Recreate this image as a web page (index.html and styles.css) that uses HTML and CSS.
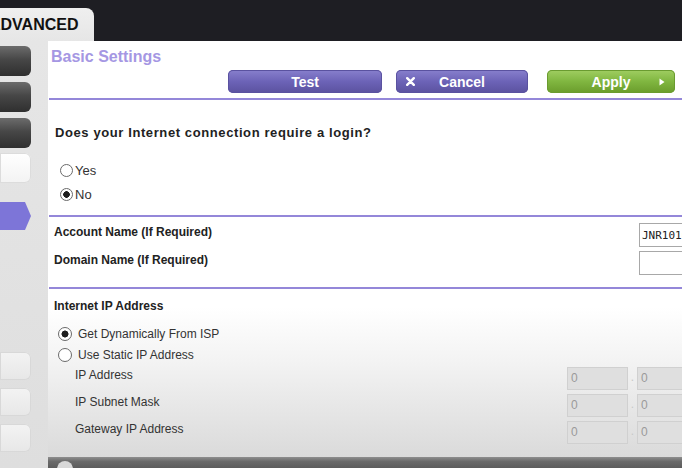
FILE: index.html
```html
<!DOCTYPE html>
<html>
<head>
<meta charset="utf-8">
<link rel="stylesheet" href="styles.css">
</head>
<body>
<header class="topbar">
  <div class="tab"><span class="tab-label">ADVANCED</span></div>
</header>
<div class="page">
  <nav class="sidebar">
    <span class="sb-btn dark"></span>
    <span class="sb-btn dark"></span>
    <span class="sb-btn dark"></span>
    <span class="sb-btn white"></span>
    <span class="sb-arrow"></span>
    <span class="sb-btn light first-light"></span>
    <span class="sb-btn light"></span>
    <span class="sb-btn light"></span>
  </nav>
  <main class="main">
    <div class="content">
      <h1 class="title">Basic Settings</h1>
      <div class="actions">
        <button class="btn purple test"><span class="btn-text">Test</span></button>
        <button class="btn purple cancel">
          <svg class="x-icon" width="9" height="9" viewBox="0 0 9 9"><path d="M1.2 1.2 L7.8 7.8 M7.8 1.2 L1.2 7.8" stroke="#fff" stroke-width="2.4" stroke-linecap="round"/></svg>
          <span class="btn-text">Cancel</span>
          <span></span>
        </button>
        <button class="btn green apply">
          <span></span>
          <span class="btn-text">Apply</span>
          <svg class="tri-icon" width="6" height="8" viewBox="0 0 6 8"><path d="M0.5 0.5 L5.5 4 L0.5 7.5 Z" fill="#fff"/></svg>
        </button>
      </div>
      <div class="rule"></div>

      <p class="question">Does your Internet connection require a login?</p>
      <div class="radio-row first-radio"><span class="radio"></span><span>Yes</span></div>
      <div class="radio-row"><span class="radio on"></span><span>No</span></div>
      <div class="rule rule-2"></div>

      <div class="field first-field">
        <label class="field-label">Account Name (If Required)</label>
        <input class="text-input" type="text" value="JNR1010" readonly>
      </div>
      <div class="field second-field">
        <label class="field-label">Domain Name (If Required)</label>
        <input class="text-input" type="text" value="" readonly>
      </div>
      <div class="rule rule-3"></div>

      <p class="section-title">Internet IP Address</p>
      <div class="ip-radio first-ip-radio"><span class="radio big on"></span><span>Get Dynamically From ISP</span></div>
      <div class="ip-radio second-ip-radio"><span class="radio big"></span><span>Use Static IP Address</span></div>

      <div class="ip-row first-ip-row">
        <span class="ip-label">IP Address</span>
        <span class="dis-input">0</span><span class="dot">.</span><span class="dis-input">0</span>
      </div>
      <div class="ip-row">
        <span class="ip-label">IP Subnet Mask</span>
        <span class="dis-input">0</span><span class="dot">.</span><span class="dis-input">0</span>
      </div>
      <div class="ip-row">
        <span class="ip-label">Gateway IP Address</span>
        <span class="dis-input">0</span><span class="dot">.</span><span class="dis-input">0</span>
      </div>
    </div>
    <div class="footer"><span class="footer-dot"></span></div>
  </main>
</div>
</body>
</html>
```

FILE: styles.css
```css
html, body {
  margin: 0;
  padding: 0;
}
body {
  width: 682px;
  height: 468px;
  overflow: hidden;
  font-family: "Liberation Sans", Arial, sans-serif;
  background: #e4e4e4;
}

/* top bar */
.topbar {
  height: 41px;
  background: #1e1e23;
  display: flex;
  align-items: flex-end;
}
.tab {
  width: 94px;
  height: 33px;
  background: linear-gradient(#efefef, #e6e6e6);
  border-top-right-radius: 8px;
  display: flex;
  align-items: center;
  overflow: hidden;
}
.tab-label {
  font-weight: bold;
  font-size: 16px;
  line-height: 20px;
  margin-left: -11px;
  padding-top: 1px;
  color: #111;
  white-space: nowrap;
}

/* page */
.page {
  display: flex;
  height: 427px;
}
.sidebar {
  width: 48px;
  flex: none;
  background: linear-gradient(#e6e6e6, #dedede);
  display: flex;
  flex-direction: column;
  padding-top: 5px;
  box-sizing: border-box;
}
.sb-btn {
  width: 31px;
  height: 30px;
  border-radius: 0 6px 6px 0;
  flex: none;
}
.sb-btn + .sb-btn { margin-top: 6px; }
.dark {
  background: linear-gradient(#6c6c6c, #474747 45%, #2f2f2f);
}
.sb-btn.white {
  margin-top: 5px;
  background: linear-gradient(#ffffff, #f3f3f3);
  box-shadow: inset 0 0 0 1px #dcdcdc;
}
.sb-arrow {
  width: 31px;
  height: 28px;
  margin-top: 19px;
  background: #7d75d8;
  clip-path: polygon(0 0, 25px 0, 31px 50%, 25px 100%, 0 100%);
  flex: none;
}
.sb-btn.light {
  height: 28px;
  margin-top: 8px;
  background: linear-gradient(#f3f3f3, #e7e7e7);
  box-shadow: inset 0 0 0 1px #d8d8d8;
}
.sb-btn.first-light { margin-top: 122px; }

/* main */
.main {
  flex: 1;
  min-width: 0;
  display: flex;
  flex-direction: column;
  overflow: hidden;
}
.content {
  flex: 1;
  background: linear-gradient(#ffffff 0, #ffffff 64%, #f4f4f4 76%, #dadada 100%);
  overflow: hidden;
}
.title {
  margin: 0 0 0 3px;
  height: 29px;
  box-sizing: border-box;
  padding-top: 6px;
  font-size: 16px;
  line-height: 20px;
  font-weight: bold;
  color: #a597e3;
}
.actions {
  display: flex;
  justify-content: flex-end;
  height: 23px;
  padding-right: 7px;
}
.btn {
  border: 0;
  padding: 0;
  height: 23px;
  border-radius: 5px;
  color: #fff;
  font: bold 14px "Liberation Sans", Arial, sans-serif;
  display: grid;
  grid-template-columns: 1fr auto 1fr;
  align-items: center;
}
.purple {
  background: linear-gradient(#8880cd, #6c63b7 50%, #5b529f);
  box-shadow: inset 0 0 0 1px #5a52a0;
}
.green {
  background: linear-gradient(#a0ce62, #80b640 50%, #6a9c2c);
  box-shadow: inset 0 0 0 1px #6a9b30;
}
.test { width: 154px; }
.test .btn-text { grid-column: 2; }
.cancel { width: 132px; margin-left: 14px; }
.apply { width: 128px; margin-left: 19px; }
.x-icon { justify-self: start; margin-left: 10px; }
.tri-icon { justify-self: end; margin-right: 10px; }

.rule {
  height: 2px;
  background: #9487d9;
  margin: 5px 0 0 1px;
}
.rule-2 { margin-top: 9px; }
.rule-3 { margin-top: 12px; }

.question {
  margin: 25px 0 0 7px;
  font-size: 13px;
  line-height: 16px;
  font-weight: bold;
  letter-spacing: 0.6px;
  color: #222;
}
.radio-row {
  display: flex;
  align-items: center;
  gap: 2px;
  height: 24px;
  padding-left: 12px;
  font-size: 13px;
  color: #333;
}
.first-radio { margin-top: 17px; }
.radio {
  width: 11px;
  height: 11px;
  border: 1px solid #6a6a6a;
  border-radius: 50%;
  background: #fff;
  flex: none;
}
.radio.on {
  background: radial-gradient(circle, #1e1e1e 0 3px, #fff 3.6px);
}
.radio.big {
  width: 12px;
  height: 12px;
}
.radio.big.on {
  background: radial-gradient(circle, #1e1e1e 0 3.2px, #fff 3.8px);
}

.field {
  display: grid;
  grid-template-columns: 591px 130px;
  align-items: center;
  height: 24px;
}
.first-field { margin-top: 6px; }
.second-field { margin-top: 4px; }
.field-label {
  padding-left: 6px;
  padding-bottom: 6px;
  font-size: 12px;
  font-weight: bold;
  color: #222;
}
.text-input {
  height: 24px;
  width: 130px;
  box-sizing: border-box;
  margin: 0;
  border: 1px solid #a8a8a8;
  background: #fff;
  padding: 0 0 0 2px;
  font: 11px "DejaVu Sans Mono", "Liberation Mono", monospace;
  color: #222;
  outline: none;
}

.section-title {
  margin: 9px 0 0 6px;
  font-size: 12px;
  line-height: 16px;
  font-weight: bold;
  color: #222;
}
.ip-radio {
  display: flex;
  align-items: center;
  gap: 6px;
  height: 20px;
  padding-left: 10px;
  font-size: 12px;
  color: #333;
}
.first-ip-radio { margin-top: 10px; }
.second-ip-radio { margin-top: 1px; }

.ip-row {
  display: grid;
  grid-template-columns: 519px 61px 9px 61px;
  align-items: start;
  height: 23px;
  margin-top: 4px;
}
.first-ip-row { margin-top: 2px; }
.ip-label {
  padding-left: 27px;
  font-size: 12px;
  line-height: 16px;
  color: #333;
}
.dis-input {
  height: 23px;
  box-sizing: border-box;
  border: 1px solid #d0d0d0;
  background: #dfdfdf;
  color: #9a9a9a;
  font-size: 12px;
  line-height: 21px;
  padding-left: 3px;
}
.dot {
  text-align: center;
  color: #c8c8c8;
  font-size: 12px;
  line-height: 21px;
}

.footer {
  height: 11px;
  flex: none;
  background: linear-gradient(#8e8e8e, #6a6a6a 40%, #5c5c5c);
  display: flex;
  align-items: flex-start;
}
.footer-dot {
  width: 16px;
  height: 16px;
  border-radius: 50%;
  background: #d8d8d8;
  margin: 4px 0 0 9px;
  flex: none;
}
```
